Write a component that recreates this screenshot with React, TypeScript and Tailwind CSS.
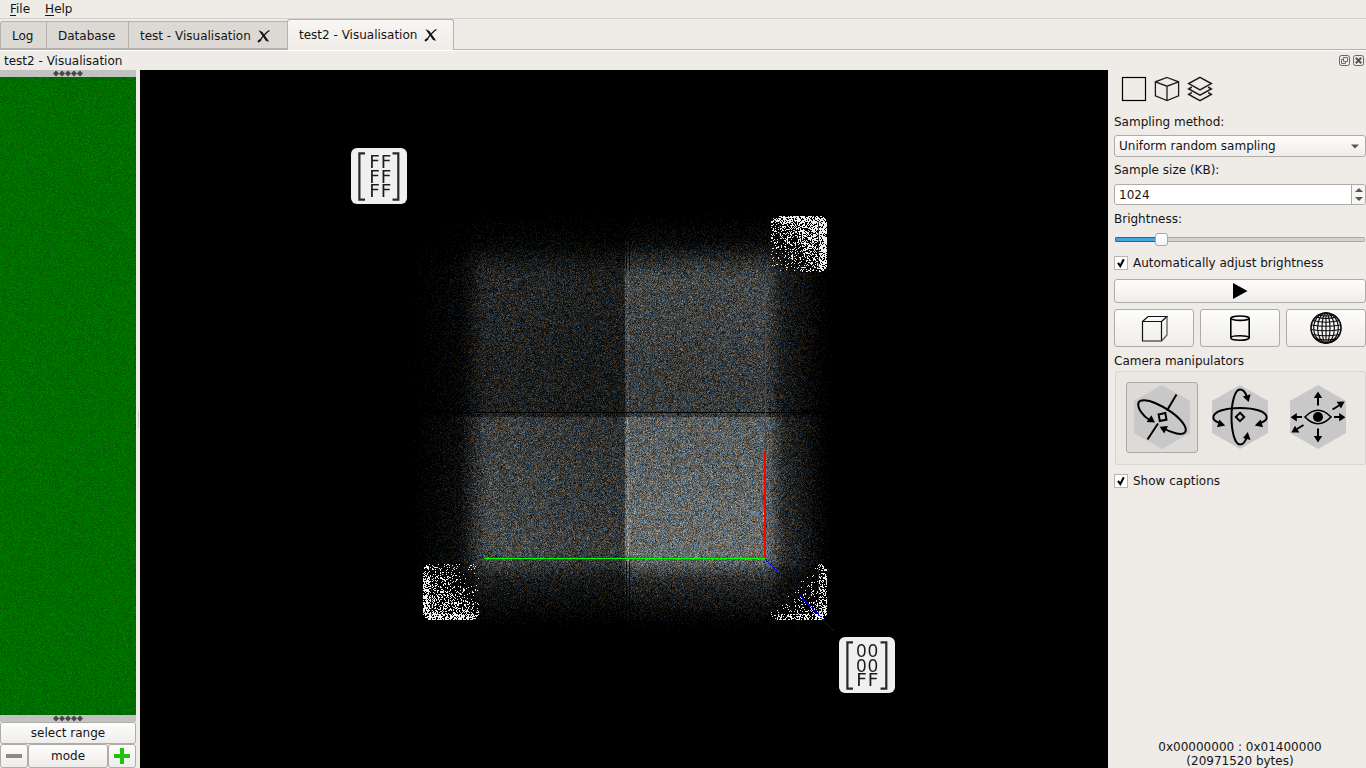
import { useLayoutEffect, useRef } from "react";
import type { ReactNode } from "react";

function makeRandom(seed: number) {
  let s = seed;
  return () => {
    s = (s + 0x6d2b79f5) | 0;
    let t = Math.imul(s ^ (s >>> 15), 1 | s);
    t = (t + Math.imul(t ^ (t >>> 7), 61 | t)) ^ t;
    return ((t ^ (t >>> 14)) >>> 0) / 4294967296;
  };
}

const smooth = (a: number, b: number, v: number) => {
  const t = Math.max(0, Math.min(1, (v - a) / (b - a)));
  return t * t * (3 - 2 * t);
};

// Density of the trigram cloud, in coordinates of the 968x698 view.
function density(x: number, y: number) {
  const right = x >= 485;
  const low = y >= 347;
  let d = right ? (low ? 102 : 70) : low ? 70 : 40;
  const ex =
    x < 485
      ? 0.22 * smooth(265, 340, x) + 0.78 * smooth(316, 350, x)
      : 1 - 0.55 * smooth(622, 646, x) - 0.45 * smooth(632, 694, x);
  const ey =
    y < 342
      ? 0.24 * smooth(137, 200, y) + 0.76 * smooth(168, 212, y)
      : 1 - 0.55 * smooth(484, 512, y) - 0.45 * smooth(494, 562, y);
  d *= ex * ey;
  if (!right) d *= 1 - 0.22 * smooth(347, 484, x);
  if (!low) d *= 1 - 0.16 * smooth(200, 335, y);
  else d *= 0.93 + 0.12 * smooth(348, 480, y);
  if (x === 487 || x === 488) d *= 1.22;
  if ((x === 486 || x === 489) && (y < 200 || y > 490)) d *= 0.2;
  if (x === 484) d *= 1.15;
  if (y === 342) d = 0;
  if ((y === 340 || y === 344) && (x < 320 || x > 650)) d *= 0.3;
  return d;
}

interface Ghost {
  x: number;
  y: number;
  chance: (u: number, v: number) => number;
}

// Captions that the cloud partly hides.
const ghosts: Ghost[] = [
  { x: 631, y: 146, chance: (u, v) => Math.max(0.06, Math.min(0.72, 0.34 + 0.42 * (u - v) + (u > 0.86 ? 0.42 : 0) + (v < 0.1 ? 0.25 : 0))) },
  { x: 283, y: 494, chance: (u, v) => Math.max(0.05, Math.min(0.66, 0.24 + 0.34 * (v - u) + (u < 0.1 ? 0.3 : 0) + (v > 0.9 ? 0.4 : 0))) },
  { x: 631, y: 494, chance: (u, v) => (u + v < 0.85 ? 0 : Math.max(0.03, Math.min(0.66, (u + v - 0.85) * 0.28 + (u > 0.84 ? 0.28 : 0) + (v > 0.9 ? 0.28 : 0)))) },
];

function Cloud() {
  const ref = useRef<HTMLCanvasElement>(null);
  useLayoutEffect(() => {
    const ctx = ref.current!.getContext("2d")!;
    const rnd = makeRandom(71);
    const img = ctx.createImageData(968, 698);
    for (let y = 0; y < 698; y++) {
      for (let x = 0; x < 968; x++) {
        const i = (y * 968 + x) * 4;
        img.data[i + 3] = 255;
        if (x < 268 || x > 694 || y < 137 || y > 562) continue;
        const d = density(x, y);
        const n = d / 10;
        let a = 0;
        let b = 0;
        for (let k = 0; k < 16; k++) {
          if (rnd() < n / 32) a++;
          if (rnd() < n / 32) b++;
        }
        img.data[i] = Math.min(255, a * 14.5 + b * 4.5);
        img.data[i + 1] = Math.min(255, a * 9.5 + b * 10.5);
        img.data[i + 2] = Math.min(255, a * 4.5 + b * 15.5);
      }
    }
    for (const g of ghosts) {
      for (let v = 0; v < 56; v++) {
        for (let u = 0; u < 56; u++) {
          const cx = Math.max(0, 6 - u, u - 49);
          const cy = Math.max(0, 6 - v, v - 49);
          if (cx * cx + cy * cy > 38) continue;
          if (rnd() > g.chance(u / 55, v / 55)) continue;
          const bracket = v > 4 && v < 52 && (u === 8 || u === 47);
          const c = bracket ? 50 : 240;
          const i = ((g.y + v) * 968 + g.x + u) * 4;
          img.data[i] = img.data[i + 1] = img.data[i + 2] = c;
        }
      }
    }
    ctx.putImageData(img, 0, 0);
    ctx.fillStyle = "#f00";
    ctx.fillRect(625, 207, 1, 174);
    ctx.fillRect(624, 381, 2, 107);
    ctx.fillStyle = "#0f0";
    ctx.fillRect(344, 488, 281, 1);
    ctx.fillStyle = "#00f";
    for (let k = 0; k < 69; k++) ctx.fillRect(625 + k, 489 + Math.round(k * 1.045), 1, 1);
  }, []);
  return <canvas ref={ref} width={968} height={698} className="block" />;
}

function ByteMap() {
  const ref = useRef<HTMLCanvasElement>(null);
  useLayoutEffect(() => {
    const ctx = ref.current!.getContext("2d")!;
    const rnd = makeRandom(9);
    const img = ctx.createImageData(136, 638);
    for (let i = 0; i < img.data.length; i += 4) {
      img.data[i + 1] = 109 + (rnd() + rnd() + rnd() - 1.5) * 20;
      img.data[i + 3] = 255;
    }
    ctx.putImageData(img, 0, 0);
  }, []);
  return <canvas ref={ref} width={136} height={638} className="block" />;
}

function Caption({ rows, left, className }: { rows: string[]; left: number; className: string }) {
  return (
    <svg className={className} width="56" height="56" viewBox="0 0 56 56">
      <rect width="56" height="56" rx="6" fill="#f0f0f0" />
      <path d="M14 5.4H8.4V51.6H14M41.5 5.4H47.3V51.6H41.5" fill="none" stroke="#2a2a2a" strokeWidth="2.2" />
      {rows.map((r, i) =>
        [0, 1].map((k) => (
          <text
            key={`${i}-${k}`}
            x={left + k * 11.6}
            y={19.9 + i * 14.6}
            textAnchor="middle"
            fontFamily={r[k] === "0" ? "Noto Sans" : "DejaVu Sans Mono"}
            fontSize="18"
            fill="#1c1c1c"
          >
            {r[k]}
          </text>
        )),
      )}
    </svg>
  );
}

function Handle() {
  return (
    <div className="flex h-[7px] items-center justify-center bg-[#c2c2c2]">
      <svg width="30" height="7" viewBox="0 0 30 7" fill="#484848">
        {[0, 1, 2, 3, 4].map((i) => (
          <path key={i} d={`M${3 + i * 6} .5l3 3-3 3-3-3z`} />
        ))}
      </svg>
    </div>
  );
}

function Btn({ className = "", children }: { className?: string; children: ReactNode }) {
  return (
    <button
      className={`flex items-center justify-center rounded-[3px] border border-[#aeaba8] bg-linear-to-b from-[#fdfdfc] to-[#efedeb] ${className}`}
    >
      {children}
    </button>
  );
}

function TabClose() {
  return (
    <svg width="14" height="14" viewBox="0 0 14 14" fill="none" stroke="#151515" strokeLinecap="round">
      <path d="M3.2 2.6L5 3.4L10.8 11.8L9.4 11.4Z" fill="#151515" strokeWidth="1.2" />
      <path d="M12 1.8C8.5 4 5.5 8 2.8 11.4" strokeWidth="1.3" />
      <path d="M1.6 12.4L3.4 11" strokeWidth="2" />
    </svg>
  );
}

function Check({ label }: { label: string }) {
  return (
    <label className="flex h-[14px] items-center gap-[5px] whitespace-nowrap">
      <span className="flex size-[14px] items-center justify-center border border-[#b9b6b2] bg-white">
        <svg width="10" height="10" viewBox="0 0 10 10" fill="none" stroke="#000">
          <path d="M2 4.8L4.3 8L7.8 1.2" strokeWidth="2.1" />
        </svg>
      </span>
      <span>{label}</span>
    </label>
  );
}

function ViewIcons() {
  return (
    <div className="flex h-[26px] gap-[7px] pl-[7px]">
      <svg width="26" height="26" viewBox="0 0 26 26" fill="none" stroke="#000">
        <rect x="1.5" y="1.5" width="23" height="23" strokeWidth="1.2" />
      </svg>
      <svg width="26" height="26" viewBox="0 0 26 26" fill="none" stroke="#1c1c1c" strokeWidth="1.3">
        <path d="M13 1.5L24.6 5.8V19.9L13 24.6L1.4 19.9V5.8ZM1.4 5.8L13 10.2L24.6 5.8M13 10.2V24.6" />
      </svg>
      <svg width="26" height="26" viewBox="0 0 26 26" fill="none" stroke="#1c1c1c" strokeWidth="1.5">
        <path d="M13 1.4L24.3 7.6L13 13.9L1.7 7.6Z" />
        <path d="M4.8 11L1.7 13L13 19.2L24.3 13L21.2 11M4.8 16.5L1.7 18.4L13 24.6L24.3 18.4L21.2 16.5" />
      </svg>
    </div>
  );
}

function Globe() {
  return (
    <svg width="32" height="32" viewBox="0 0 32 32" fill="none" stroke="#0a0a0a" strokeWidth="1.15">
      <circle cx="16" cy="16" r="15" strokeWidth="1.6" />
      <ellipse cx="16" cy="16" rx="4" ry="15" />
      <ellipse cx="16" cy="16" rx="8.4" ry="15" />
      <ellipse cx="16" cy="16" rx="12.3" ry="15" />
      <path d="M16 1V31M6 5Q16 8 26 5M3 8.5Q16 12 29 8.5M1.5 13Q16 15.5 30.5 13M1 17.5Q16 20 31 17.5M2.5 22.5Q16 25 29.5 22.5M5 26.5Q16 29.5 27 26.5M8 3Q16 5 24 3" />
    </svg>
  );
}

const HEX = "M28 0L56 16V48L28 64L0 48V16Z";

function Trackball() {
  return (
    <svg width="56" height="64" viewBox="0 0 56 64" fill="none" stroke="#000" strokeWidth="2">
      <path d={HEX} fill="#c8c8c8" stroke="none" />
      <path d="M42.5 9.5L33 25.5M24 38.5L13.5 54.5" />
      <path d="M15.5 35C9 31 3.5 23.5 4.3 18.5C5 14 14 14.5 21 18C32 22.5 45 31 50.5 40.5C54 47.5 50 50 42.5 48.5C38 47.5 33 45.5 29 43" />
      <path d="M24.6 29.4L31.3 28L32.5 34.6L25.8 36Z" />
      <path d="M21 37.6L12.6 37L17.4 30.2Z M25.6 41.8L34 41L30.2 48.4Z" fill="#000" stroke="none" />
    </svg>
  );
}

function Rotate() {
  return (
    <svg width="56" height="64" viewBox="0 0 56 64" fill="none" stroke="#000" strokeWidth="2">
      <path d={HEX} fill="#c8c8c8" stroke="none" />
      <path d="M8 38C4 36.8 1.3 35 1.3 32.5C1.3 26.5 13 23 28 23C43 23 54.7 26.5 54.7 32.5C54.7 35 52 36.8 48 38" />
      <path d="M34.5 11C33 6.5 31 4.5 28 4.5C23 4.5 19.5 17 19.5 32C19.5 47 23 59.5 28 59.5C31 59.5 33 57 34.5 53" />
      <path d="M28 27.8L32.2 32L28 36.2L23.8 32Z" />
      <path d="M13.2 40.4L5 42.2L7.4 34.6Z M42.8 40.4L51 42.2L48.6 34.6Z M36.6 17L30.8 11.4L38.6 9.2Z M35.8 47L38.6 55L31 53Z" fill="#000" stroke="none" />
    </svg>
  );
}

function Fly() {
  return (
    <svg width="56" height="64" viewBox="0 0 56 64" fill="none" stroke="#000" strokeWidth="2">
      <path d={HEX} fill="#c8c8c8" stroke="none" />
      <path d="M15 32Q28 18.5 41 32Q28 45.5 15 32Z" strokeWidth="1.7" />
      <circle cx="28" cy="32" r="5" fill="#000" stroke="none" />
      <path d="M28 20.5V12M28 43.5V52M12 32H6M44 32H50M42.5 24.5L49 20.5M13.5 40L7 44" />
      <path d="M28 6.6L32.2 13H23.8Z M28 57.4L32.2 51H23.8Z M.6 32.2L6.8 28V36.4Z M55.4 32.2L49.2 28V36.4Z M54.6 16.6L51 23.4L46.6 16.8Z M1.4 47.6L5 40.8L9.4 47.4Z" fill="#000" stroke="none" />
    </svg>
  );
}

function Toolbox() {
  return (
    <aside className="flex w-[258px] flex-col pt-[6px] pl-[6px]">
      <ViewIcons />
      <div className="mt-[12px] h-[16px] leading-[16px]">Sampling method:</div>
      <Btn className="mt-[5px] h-[22px] !justify-between pr-[6px] pl-[4px]">
        <span>Uniform random sampling</span>
        <svg width="8" height="5" fill="#555"><path d="M0 .5H8L4 4.5Z" /></svg>
      </Btn>
      <div className="mt-[5px] h-[16px] leading-[16px]">Sample size (KB):</div>
      <div className="mt-[6px] flex h-[21px] rounded-[3px] border border-[#aeaba8] bg-white">
        <span className="flex-1 pl-[4px] leading-[20px]">1024</span>
        <span className="flex w-[14px] flex-col items-center justify-center gap-[5px] rounded-r-[2px] border-l border-[#aeaba8] bg-[#f7f6f5]">
          <svg width="8" height="4" fill="#555"><path d="M0 4H8L4 0Z" /></svg>
          <svg width="8" height="4" fill="#555"><path d="M0 0H8L4 4Z" /></svg>
        </span>
      </div>
      <div className="mt-[6px] h-[16px] leading-[16px]">Brightness:</div>
      <div className="mt-[6px] mr-px ml-px flex h-[13px] items-center">
        <span className="h-[5px] w-[40px] rounded-l-[2px] border border-r-0 border-[#20689c] bg-[#46a4e0]" />
        <span className="h-[13px] w-[13px] rounded-[3px] border border-[#aaa7a4] bg-linear-to-b from-white to-[#f4f3f2]" />
        <span className="h-[5px] flex-1 rounded-r-[2px] border border-l-0 border-[#aba8a5] bg-[#d5d2cf]" />
      </div>
      <div className="mt-[10px]">
        <Check label="Automatically adjust brightness" />
      </div>
      <Btn className="mt-[9px] h-[24px]">
        <svg width="16" height="18" viewBox="0 0 16 18"><path d="M1 1L15.5 9L1 17Z" /></svg>
      </Btn>
      <div className="mt-[6px] flex gap-[6px]">
        <Btn className="h-[38px] w-[80px]">
          <svg width="28" height="28" viewBox="0 0 28 28" fill="none" stroke="#111" strokeWidth="1.2">
            <path d="M2.5 7.5H21.5V27H2.5ZM2.5 7.5L8 2.5H27L21.5 7.5" />
            <path d="M27 2.5V21L21.5 27" stroke="#555" />
          </svg>
        </Btn>
        <Btn className="h-[38px] w-[80px]">
          <svg width="22" height="26" viewBox="0 0 22 26" fill="none" stroke="#000" strokeWidth="1.6">
            <ellipse cx="11" cy="3.2" rx="9.2" ry="2.2" />
            <path d="M1.8 3.2V22.8C1.8 26 20.2 26 20.2 22.8V3.2M1.8 22.8C1.8 20 20.2 20 20.2 22.8" />
          </svg>
        </Btn>
        <Btn className="h-[38px] w-[80px]"><Globe /></Btn>
      </div>
      <div className="mt-[6px] h-[16px] leading-[16px]">Camera manipulators</div>
      <div className="mt-[2px] ml-px flex h-[94px] items-start gap-[7px] rounded-[2px] border border-[#d8d5d2] bg-[#ebe8e4] pt-[10px] pl-[10px]">
        <span className="flex h-[71px] w-[72px] justify-center rounded-[3px] border border-[#aaa7a5] bg-[#dddad7] pt-[2px]"><Trackball /></span>
        <span className="flex h-[71px] w-[70px] justify-center pt-[3px]"><Rotate /></span>
        <span className="flex h-[71px] w-[72px] justify-center pt-[3px]"><Fly /></span>
      </div>
      <div className="mt-[9px]">
        <Check label="Show captions" />
      </div>
      <div className="mt-auto text-center leading-[14px]">
        <div>0x00000000 : 0x01400000</div>
        <div>(20971520 bytes)</div>
      </div>
    </aside>
  );
}

export default function App() {
  return (
    <div className="flex h-[768px] w-[1366px] flex-col overflow-hidden bg-[#efebe7] font-['DejaVu_Sans',sans-serif] text-[12px] leading-[16px] text-[#141414]">
      <nav className="flex h-[19px] gap-[15px] border-b border-[#d4d1ce] pl-[10px] leading-[19px]">
        <span><u className="underline-offset-2">F</u>ile</span>
        <span><u className="underline-offset-2">H</u>elp</span>
      </nav>
      <div className="flex h-[32px] items-end border-b border-white pb-px shadow-[inset_0_-1px_0_#b4b1ae]">
        <div className="flex h-[28px] w-[46px] items-center rounded-tl-[3px] border border-r-0 border-[#b4b1ae] bg-[#dcd9d5] pt-px pl-[11px]">Log</div>
        <div className="flex h-[28px] w-[82px] items-center border border-r-0 border-[#b4b1ae] bg-[#dcd9d5] pt-px pl-[11px]">Database</div>
        <div className="flex h-[28px] w-[159px] items-center gap-[6px] border border-r-0 border-[#b4b1ae] bg-[#dcd9d5] pt-px pl-[11px] whitespace-nowrap">
          test - Visualisation <TabClose />
        </div>
        <div className="-mb-px flex h-[31px] w-[167px] items-center gap-[7px] rounded-t-[3px] border border-b-0 border-[#b4b1ae] bg-linear-to-b from-[#f8f6f4] to-[#efebe7] pl-[11px] whitespace-nowrap">
          test2 - Visualisation <TabClose />
        </div>
      </div>
      <div className="flex h-[19px] items-center justify-between pr-[2px] pl-[4px]">
        <span className="pt-px">test2 - Visualisation</span>
        <span className="flex gap-[3px]">
          <svg width="11" height="11" viewBox="0 0 11 11" fill="none" stroke="#666">
            <rect x=".5" y=".5" width="10" height="10" rx="2" />
            <path d="M4.5 2.5H8.5V6.5H4.5ZM6.5 6.5V8.5H2.5V4.5H4.5" strokeWidth=".9" />
          </svg>
          <svg width="11" height="11" viewBox="0 0 11 11" fill="none" stroke="#666">
            <rect x=".5" y=".5" width="10" height="10" rx="2" />
            <path d="M2.8 2.8L8.2 8.2M8.2 2.8L2.8 8.2" stroke="#555" strokeWidth="2" />
          </svg>
        </span>
      </div>
      <div className="flex h-[698px]">
        <aside className="flex w-[136px] flex-col">
          <Handle />
          <ByteMap />
          <Handle />
          <Btn className="h-[22px]">select range</Btn>
          <div className="flex h-[24px]">
            <Btn className="w-[28px]"><span className="h-[4px] w-[16px] bg-[#8c8a85]" /></Btn>
            <Btn className="w-[80px]">mode</Btn>
            <Btn className="w-[28px]">
              <svg width="16" height="16" fill="#1fc30c"><path d="M6 0H10V6H16V10H10V16H6V10H0V6H6Z" /></svg>
            </Btn>
          </div>
        </aside>
        <div className="flex w-[4px] items-center justify-center">
          <span className="h-[17px] border-l border-dotted border-[#bbb8b5]" />
        </div>
        <main className="relative w-[968px] bg-black">
          <Cloud />
          <Caption rows={["FF", "FF", "FF"]} left={23.3} className="absolute top-[78px] left-[211px]" />
          <Caption rows={["00", "00", "FF"]} left={22.3} className="absolute top-[567px] left-[699px]" />
        </main>
        <Toolbox />
      </div>
    </div>
  );
}
